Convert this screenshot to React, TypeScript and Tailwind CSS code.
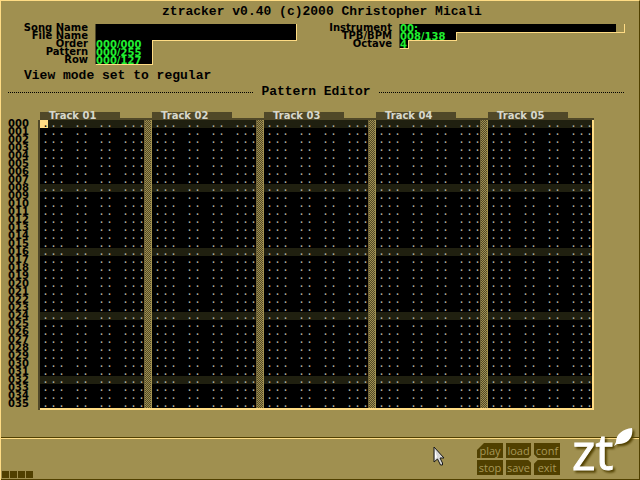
import React, { useId } from "react";

const LINE = "font-['Liberation_Mono','DejaVu_Sans_Mono',monospace] text-[13px] leading-[8px] font-bold whitespace-pre";
const DENSE = "font-['DejaVu_Sans','Liberation_Sans',sans-serif] text-[10px] leading-[8px] font-bold whitespace-pre";

const TRACKS = ["Track 01", "Track 02", "Track 03", "Track 04", "Track 05"];
const ROWS = Array.from({ length: 36 }, (_, i) => String(i).padStart(3, "0"));
const EMPTY_EVENT = [..."... .. .. ..."];

type FieldProps = { label: string; value?: string; labelWidth: string; box: string };

function Field({ label, value = "", labelWidth, box }: FieldProps) {
  const id = useId();
  return (
    <div className="flex h-2 items-start">
      <label htmlFor={id} className={`${DENSE} ${labelWidth} shrink-0 text-right text-black`}>
        {label}
      </label>
      <div className={`ml-[7px] box-content h-2 shrink-0 border-r border-b border-l border-r-[#ffdc84] border-b-[#ffdc84] border-l-[#504828] bg-black ${box}`}>
        <input
          id={id}
          defaultValue={value}
          className={`${DENSE} block h-2 w-full bg-transparent p-0 text-[#20f030] outline-none`}
        />
      </div>
    </div>
  );
}

function EventCell({ cursor }: { cursor: boolean }) {
  return (
    <div className="flex h-2 font-['DejaVu_Sans','Liberation_Sans',sans-serif] text-[8px] leading-[10px] font-bold text-[#b0b0a0]">
      {EMPTY_EVENT.map((char, i) => (
        <span key={i} className={cursor && i === 0 ? "h-2 w-2 bg-[#ffdc84] pl-1 text-black" : "h-2 w-2 pl-1"}>
          {char}
        </span>
      ))}
    </div>
  );
}

function PatternGrid() {
  return (
    <table className="ml-2 border-collapse">
      <thead>
        <tr className="h-2">
          <td className="w-[30px] p-0" />
          <td className="w-[2px] p-0" />
          {TRACKS.map((t, i) => (
            <React.Fragment key={t}>
              <th scope="col" className="h-2 w-[104px] p-0 text-left">
                <div className="h-2 border-b-2 border-[#504828]">
                  <div className={`${DENSE} h-[6px] w-20 bg-[#504828] pl-[9px] text-[#d8d8cc]`}>{t}</div>
                </div>
              </th>
              <td className="h-2 p-0">
                <div className={i < TRACKS.length - 1 ? "h-2 w-2 border-b-2 border-[#504828]" : "h-2 w-[2px] border-b-2 border-[#504828]"} />
              </td>
            </React.Fragment>
          ))}
        </tr>
      </thead>
      <tbody>
        {ROWS.map((row, r) => (
          <tr key={row} className="h-2">
            <th scope="row" className="h-2 p-0 text-left">
              <div className={`${DENSE} h-2 text-black`}>{row}</div>
            </th>
            <td className="bg-[#504828] p-0" />
            {TRACKS.map((t, c) => (
              <React.Fragment key={t}>
                <td className={r % 8 === 0 ? "bg-[#202010] p-0" : "bg-black p-0"}>
                  <EventCell cursor={r === 0 && c === 0} />
                </td>
                {c < TRACKS.length - 1 ? (
                  <td className="h-2 p-0">
                    <div className="h-2 w-2 border-r border-l border-r-[#a09050] border-l-[#706438] bg-[conic-gradient(#a09050_25%,#504828_0_50%,#a09050_0_75%,#504828_0)] bg-[length:2px_2px]" />
                  </td>
                ) : (
                  <td className="w-[2px] bg-[#ffdc84] p-0" />
                )}
              </React.Fragment>
            ))}
          </tr>
        ))}
        <tr className="h-[2px]">
          <td className="p-0" />
          <td className="bg-[#504828] p-0" />
          <td colSpan={10} className="h-[2px] bg-[#ffdc84] p-0" />
        </tr>
      </tbody>
    </table>
  );
}

const DOTTED = "h-px bg-[linear-gradient(90deg,#000_50%,transparent_50%)] bg-[length:2px_1px]";
const KEY = "h-[15px] bg-[#504000] text-center font-['Open_Sans','Noto_Sans',sans-serif] text-[11px] leading-[14px] text-[#a89858]";

export default function App() {
  return (
    <main className="flex min-h-screen flex-col border-t border-r border-l border-t-[#ffdc84] border-r-[#504000] border-l-[#ffdc84] bg-[#a09050]">
      <h1 className={`${LINE} mt-[7px] pl-1 text-center text-black`}>ztracker v0.40 (c)2000 Christopher Micali</h1>

      <section className="mt-2 flex">
        <div className="w-[298px] shrink-0">
          <Field label="Song Name" labelWidth="w-[87px]" box="w-[200px] border-b-0" />
          <Field label="File Name" labelWidth="w-[87px]" box="w-[200px]" />
          <Field label="Order" value="000/000" labelWidth="w-[87px]" box="w-14 border-b-0" />
          <Field label="Pattern" value="000/255" labelWidth="w-[87px]" box="w-14 border-b-0" />
          <Field label="Row" value="000/127" labelWidth="w-[87px]" box="w-14" />
        </div>
        <div className="flex-1">
          <Field label="Instrument" value="00:" labelWidth="w-[93px]" box="w-[224px] bg-[linear-gradient(90deg,#000_216px,#a09050_216px)]" />
          <Field label="TPB/BPM" value="008/138" labelWidth="w-[93px]" box="w-14" />
          <Field label="Octave" value="4" labelWidth="w-[93px]" box="w-2" />
        </div>
      </section>

      <p className={`${LINE} mt-2 pl-[23px] text-black`}>View mode set to regular</p>

      <div className="mt-2 mr-[15px] ml-[7px] flex items-center gap-2">
        <div className={`${DOTTED} flex-1`} />
        <h2 className={`${LINE} text-black`}>Pattern Editor</h2>
        <div className={`${DOTTED} flex-1`} />
      </div>

      <section className="mt-4 -ml-px">
        <PatternGrid />
      </section>

      <footer className="mt-auto flex h-[43px] items-end border-t border-b border-[#504000]">
        <div className="flex h-[41px] flex-1 items-end border-t border-[#ffdc84]">
          <div className="mb-px ml-px flex flex-1 gap-px">
            <i className="size-[7px] bg-[#504000]" />
            <i className="size-[7px] bg-[#504000]" />
            <i className="size-[7px] bg-[#504000]" />
            <i className="size-[7px] bg-[#504000]" />
          </div>
          <svg className="mr-8 mb-[13px] h-5 w-3" viewBox="0 0 12 20" aria-hidden="true">
            <path d="M1 1V16L4.5 13L7.5 19H9.5V17L7 12H11Z" fill="#d8d8d8" stroke="#181818" />
            <path d="M2 4V13L4 11Z" fill="#fff" />
          </svg>
          <div className="relative mb-1 grid grid-cols-[26px_25px_26px] gap-x-[3px] gap-y-[2px]">
            <button className={`${KEY} [clip-path:polygon(7px_0,100%_0,100%_100%,0_100%,0_7px)]`}>play</button>
            <button className={KEY}>load</button>
            <button className={KEY}>conf</button>
            <button className={KEY}>stop</button>
            <button className={KEY}>save</button>
            <button className={KEY}>exit</button>
            <i className="absolute top-[12px] left-[52px] size-2 rotate-45 bg-[#a09050]" />
          </div>
          <svg className="-mt-3 ml-3 h-[51px] w-[67px] shrink-0 overflow-visible drop-shadow-[2px_2px_1px_#504000]" viewBox="0 0 67 51" role="img" aria-label="zt">
            <text x="0" y="42" className="font-['Open_Sans','Noto_Sans',sans-serif] text-[50px] font-medium" fill="#fff" stroke="#fff">zt</text>
            <path d="M42 18L44 14C44 6 51 1 60 0C62 10 55 17 45 16Z" fill="#fff" />
          </svg>
        </div>
      </footer>
    </main>
  );
}
